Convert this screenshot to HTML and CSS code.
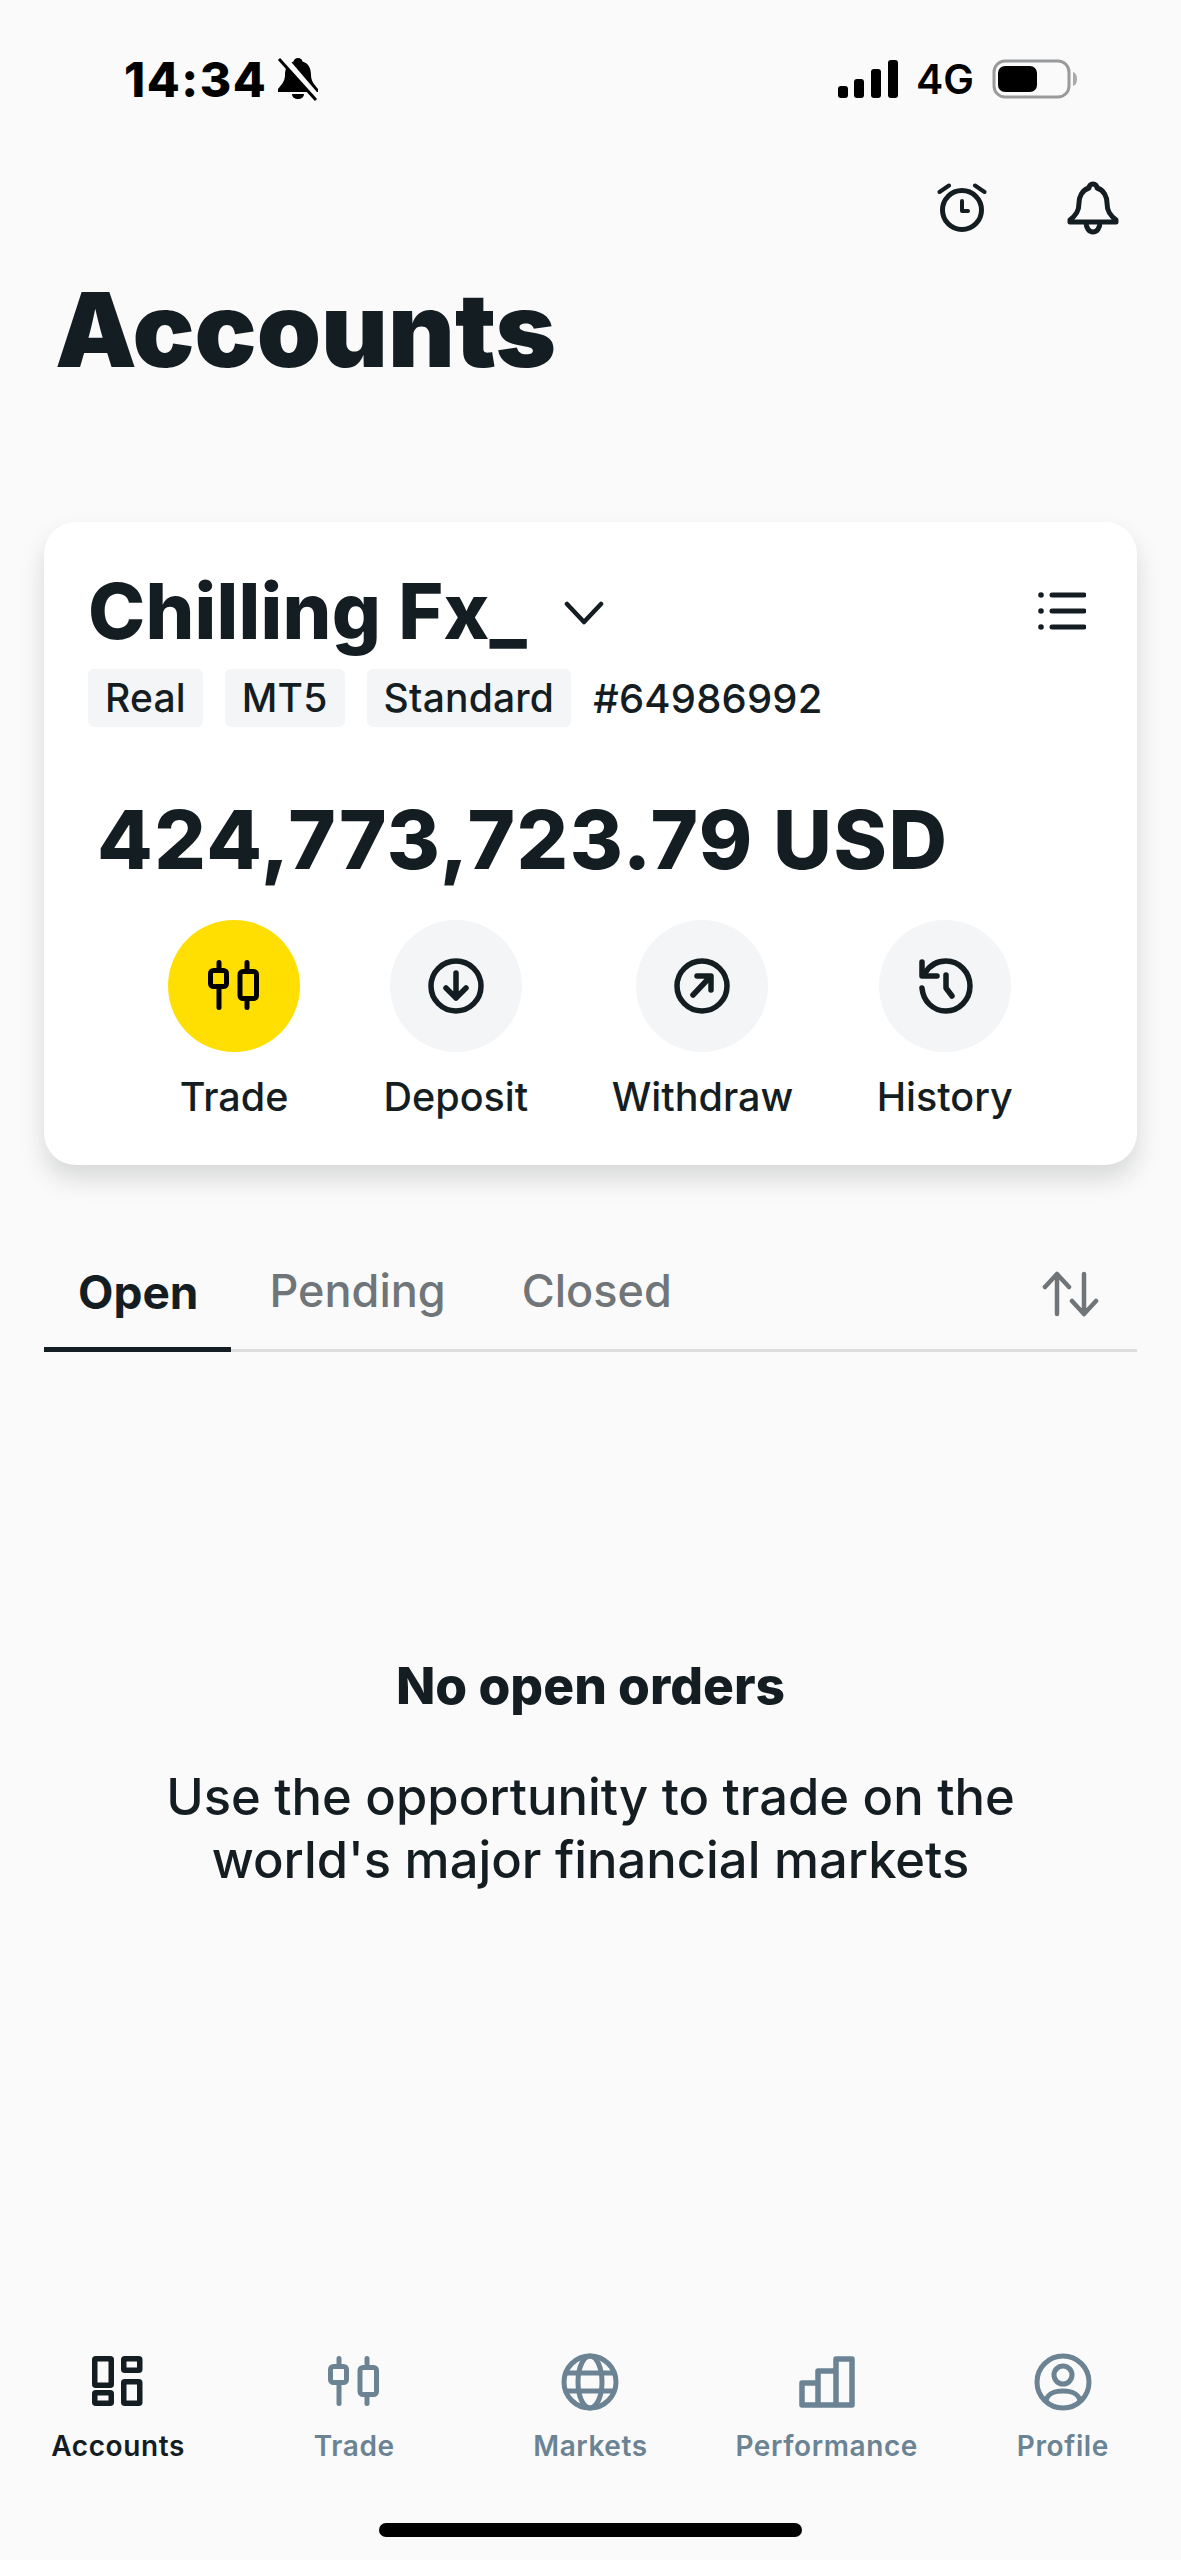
FILE: index.html
```html
<!DOCTYPE html>
<html lang="en">
<head>
  <meta charset="UTF-8" />
  <title>Accounts</title>
  <link rel="stylesheet" href="styles.css">
</head>
<body>
  <svg class="defs" width="0" height="0">
    <symbol id="candles" viewBox="0 0 52 52">
      <path d="M11 2.5v8M11 26.5v21M39 2.5v9M39 38.5v9" fill="none" stroke="currentColor" stroke-width="5" stroke-linecap="round" />
      <rect x="2.5" y="10.5" width="16" height="16" rx="3" fill="none" stroke="currentColor" stroke-width="5" />
      <rect x="32" y="11.5" width="16.5" height="27" rx="3" fill="none" stroke="currentColor" stroke-width="5" />
    </symbol>
  </svg>

  <div class="status-bar">
    <div class="status-left">
      <span class="clock">14:34</span>
      <svg class="muted-bell" width="42" height="44" viewBox="0 0 42 44">
        <path d="M21 1c2.500 0 4 1.500 4.500 3.500C32 6.500 34 12 34 18c0 6 3 9 7 14v3H1v-3c4-5 7-8 7-14C8 12 10 6.500 16.500 4.500 17 2.500 18.500 1 21 1zM15 37h12c0 3-2.700 5-6 5s-6-2-6-5z" fill="#000" />
        <path d="M6 0l36 42" stroke="#fafafa" stroke-width="6" />
        <path d="M2 2l37 41" stroke="#000" stroke-width="3" />
      </svg>
    </div>
    <div class="status-right">
      <svg width="60" height="40" viewBox="0 0 60 40">
        <rect x="0" y="27" width="10" height="12" rx="3" />
        <rect x="16" y="20" width="10" height="19" rx="3" />
        <rect x="33" y="10" width="10" height="29" rx="3" />
        <rect x="50" y="1" width="10" height="38" rx="3" />
      </svg>
      <span class="network">4G</span>
      <svg width="86" height="40" viewBox="0 0 86 40">
        <rect x="2" y="2" width="75" height="36" rx="11" fill="none" stroke="#989a9b" stroke-width="3" />
        <rect x="6" y="7" width="39" height="26" rx="7" fill="#000" />
        <path d="M81 13c3 1 4 4 4 7s-1 6-4 7z" fill="#a8aaab" />
      </svg>
    </div>
  </div>

  <div class="top-actions">
    <svg class="dark-icon" width="50" height="50" viewBox="0 0 50 50" fill="none" stroke="currentColor" stroke-width="5">
      <circle cx="25" cy="27" r="19.5" />
      <path d="M25 18v10h6" stroke-width="4" stroke-linecap="round" stroke-linejoin="round" />
      <path d="M2.500 9L12 2.500M47.500 9L38 2.500" stroke-width="4" stroke-linecap="round" />
    </svg>
    <svg class="dark-icon" width="54" height="54" viewBox="0 0 54 54" fill="none" stroke="currentColor" stroke-width="5" stroke-linejoin="round">
      <path d="M27 3c2.500 0 4 2 4 4 7 2 10 9 10 15 0 8 3 12 9 17v2H4v-2c6-5 9-9 9-17 0-6 3-13 10-15 0-2 1.500-4 4-4z" />
      <path d="M20 41c0 6 3 10 7 10s7-4 7-10" />
    </svg>
  </div>

  <h1 class="page-title">Accounts</h1>

  <div class="account-card">
    <div class="account-head">
      <span class="account-name">Chilling Fx_</span>
      <svg class="chevron" width="40" height="24" viewBox="0 0 40 24" fill="none" stroke="currentColor" stroke-width="4.500" stroke-linecap="round" stroke-linejoin="round">
        <path d="M3 3l17 18L37 3" />
      </svg>
      <svg class="list-icon" width="48" height="40" viewBox="0 0 48 40">
        <path d="M14 4h32M14 20h32M14 36h32" stroke="currentColor" stroke-width="5" stroke-linecap="round" />
        <circle cx="3" cy="4" r="2.800" fill="currentColor" />
        <circle cx="3" cy="20" r="2.800" fill="currentColor" />
        <circle cx="3" cy="36" r="2.800" fill="currentColor" />
      </svg>
    </div>

    <div class="account-tags">
      <span class="chip">Real</span>
      <span class="chip">MT5</span>
      <span class="chip">Standard</span>
      <span class="account-no">#64986992</span>
    </div>

    <div class="balance">424,773,723.79 USD</div>

    <div class="actions">
      <div class="action">
        <div class="action-circle yellow">
          <svg class="black-icon" width="52" height="52"><use href="#candles" /></svg>
        </div>
        <span>Trade</span>
      </div>
      <div class="action">
        <div class="action-circle">
          <svg width="56" height="56" viewBox="0 0 56 56" fill="none" stroke="currentColor" stroke-width="5.500" stroke-linecap="round" stroke-linejoin="round">
            <circle cx="28" cy="28" r="25" />
            <path d="M28 15v25M18 30l10 10 10-10" />
          </svg>
        </div>
        <span>Deposit</span>
      </div>
      <div class="action">
        <div class="action-circle">
          <svg width="56" height="56" viewBox="0 0 56 56" fill="none" stroke="currentColor" stroke-width="5.500" stroke-linecap="round" stroke-linejoin="round">
            <circle cx="28" cy="28" r="25" />
            <path d="M19 37l17-18M23 18h14v14" />
          </svg>
        </div>
        <span>Withdraw</span>
      </div>
      <div class="action">
        <div class="action-circle">
          <svg width="56" height="56" viewBox="0 0 56 56" fill="none" stroke="currentColor" stroke-width="5.500" stroke-linecap="round" stroke-linejoin="round">
            <path d="M5 30c1 13 11 23 24 23 13 0 24-11 24-25S42 3 29 3C20 3 13 7 8 15" />
            <path d="M5 4v14h15" />
            <path d="M29 17v13l6 8" />
          </svg>
        </div>
        <span>History</span>
      </div>
    </div>
  </div>

  <div class="tabs">
    <span class="tab active">Open</span>
    <span class="tab">Pending</span>
    <span class="tab">Closed</span>
    <svg class="sort-icon" width="58" height="46" viewBox="0 0 58 46" fill="none" stroke="currentColor" stroke-width="4.500" stroke-linecap="round" stroke-linejoin="round">
      <path d="M15 43V3M3 16L15 3l12 13" />
      <path d="M42 3v40M30 30l12 13 12-13" />
    </svg>
  </div>

  <div class="empty-state">
    <div class="empty-title">No open orders</div>
    <p class="empty-text">Use the opportunity to trade on the<br>world's major financial markets</p>
  </div>

  <div class="tab-bar">
    <div class="nav-item current">
      <svg width="52" height="52" viewBox="0 0 52 52" fill="none" stroke="currentColor" stroke-width="5.500" stroke-linejoin="round">
        <rect x="2.750" y="2.750" width="16.500" height="26.500" rx="1" />
        <rect x="31.750" y="2.750" width="16" height="11.500" rx="1" />
        <rect x="2.750" y="36.750" width="16.500" height="10.500" rx="1" />
        <rect x="31.750" y="25.750" width="16" height="21.500" rx="1" />
      </svg>
      <span>Accounts</span>
    </div>
    <div class="nav-item">
      <svg width="52" height="52"><use href="#candles" /></svg>
      <span>Trade</span>
    </div>
    <div class="nav-item">
      <svg width="58" height="58" viewBox="0 0 58 58" fill="none" stroke="currentColor" stroke-width="5">
        <circle cx="29" cy="29" r="26" />
        <ellipse cx="29" cy="29" rx="12" ry="26" />
        <path d="M6 20h46M6 38h46" />
      </svg>
      <span>Markets</span>
    </div>
    <div class="nav-item">
      <svg width="56" height="52" viewBox="0 0 56 52" fill="none" stroke="currentColor" stroke-width="5.500" stroke-linejoin="round">
        <path d="M3 49V27h16v22zM19 49V15h18v34zM37 49V3h16v46z" />
      </svg>
      <span>Performance</span>
    </div>
    <div class="nav-item">
      <svg width="58" height="58" viewBox="0 0 58 58" fill="none" stroke="currentColor" stroke-width="5">
        <circle cx="29" cy="29" r="26" />
        <circle cx="29" cy="22" r="9" />
        <path d="M12 47c3-8 10-9 17-9s14 1 17 9" />
      </svg>
      <span>Profile</span>
    </div>
  </div>

  <div class="home-bar"></div>
</body>
</html>
```

FILE: styles.css
```css
* {
  margin: 0;
  padding: 0;
  box-sizing: border-box;
}

html,
body {
  height: 100%;
}

body {
  display: flex;
  flex-direction: column;
  background: #fafafa;
  color: #141d22;
  font-family: Inter, "Noto Sans", sans-serif;
  overflow: hidden;
}

.defs {
  position: absolute;
}

.status-bar {
  display: flex;
  justify-content: space-between;
  align-items: center;
  height: 80px;
  margin-top: 39px;
  padding: 0 103px 0 124px;
  color: #000;
}

.status-left,
.status-right {
  display: flex;
  align-items: center;
}

.clock {
  font-size: 48px;
  font-weight: 800;
  letter-spacing: 1.5px;
}

.muted-bell {
  margin-left: 10px;
}

.network {
  margin: 0 18px;
  font-size: 41px;
  font-weight: 600;
}

.top-actions {
  display: flex;
  justify-content: flex-end;
  align-items: center;
  gap: 79px;
  height: 60px;
  margin-top: 59px;
  padding-right: 61px;
}

.dark-icon {
  color: #141d22;
}

.page-title {
  margin-top: 30px;
  padding-left: 55px;
  font-size: 103px;
  line-height: 124px;
  font-weight: 900;
}

.account-card {
  margin: 130px 44px 0;
  height: 643px;
  padding: 40px 44px 0;
  background: #fff;
  border-radius: 32px;
  box-shadow: 0 14px 24px rgba(20, 29, 34, 0.15);
}

.account-head {
  display: flex;
  align-items: center;
  height: 98px;
}

.account-name {
  font-size: 77px;
  font-weight: 800;
  letter-spacing: 0.2px;
}

.chevron {
  margin: 4px 0 0 37px;
}

.list-icon {
  margin-left: auto;
  margin-right: 7px;
}

.account-tags {
  display: flex;
  align-items: center;
  gap: 22px;
  margin-top: 9px;
}

.chip {
  height: 58px;
  padding: 0 17px;
  background: #f3f5f7;
  border-radius: 6px;
  line-height: 58px;
  font-size: 39px;
  font-weight: 500;
  letter-spacing: 0.2px;
}

.account-no {
  font-size: 40px;
  font-weight: 500;
  letter-spacing: 0.2px;
}

.balance {
  margin: 65px 0 0 9px;
  font-size: 81px;
  line-height: 97px;
  font-weight: 800;
  letter-spacing: 1.5px;
}

.actions {
  display: flex;
  gap: 83.5px;
  margin-top: 31px;
  padding-left: 80px;
}

.action {
  display: flex;
  flex-direction: column;
  align-items: center;
  min-width: 132px;
  font-size: 39.5px;
  font-weight: 500;
}

.action span {
  margin-top: 22px;
  line-height: 46px;
}

.action-circle {
  display: flex;
  justify-content: center;
  align-items: center;
  width: 132px;
  height: 132px;
  background: #f3f5f7;
  border-radius: 50%;
}

.yellow {
  background: #ffde02;
}

.black-icon {
  color: #000;
}

.tabs {
  display: flex;
  align-items: center;
  position: relative;
  margin: 85px 44px 0;
  height: 102px;
  border-bottom: 3px solid #dcdedf;
}

.tab {
  height: 102px;
  padding: 0 38px;
  line-height: 84px;
  font-size: 45px;
  font-weight: 500;
  color: #6f7578;
}

.tab.active {
  padding: 0 33px 0 34px;
  margin-bottom: -3px;
  font-size: 46px;
  font-weight: 700;
  color: #141d22;
  border-bottom: 5px solid #141d22;
}

.tab.active + .tab {
  padding-left: 38px;
}

.sort-icon {
  margin: -12px 37px 0 auto;
  color: #6f7578;
}

.empty-state {
  flex: 1;
  padding-top: 303px;
  text-align: center;
}

.empty-title {
  font-size: 51.5px;
  line-height: 60px;
  font-weight: 800;
}

.empty-text {
  margin-top: 50px;
  font-size: 50.7px;
  line-height: 63px;
  font-weight: 500;
}

.tab-bar {
  display: grid;
  grid-template-columns: repeat(5, 1fr);
  align-items: start;
}

.nav-item {
  display: flex;
  flex-direction: column;
  align-items: center;
  color: #6b8393;
  font-size: 28px;
  font-weight: 600;
  letter-spacing: 0.6px;
}

.nav-item svg {
  height: 58px;
}

.nav-item span {
  margin-top: 17px;
  line-height: 36px;
}

.nav-item.current {
  color: #141d22;
}

.home-bar {
  width: 423px;
  height: 14px;
  margin: 59px auto 23px;
  background: #000;
  border-radius: 7px;
}
```
